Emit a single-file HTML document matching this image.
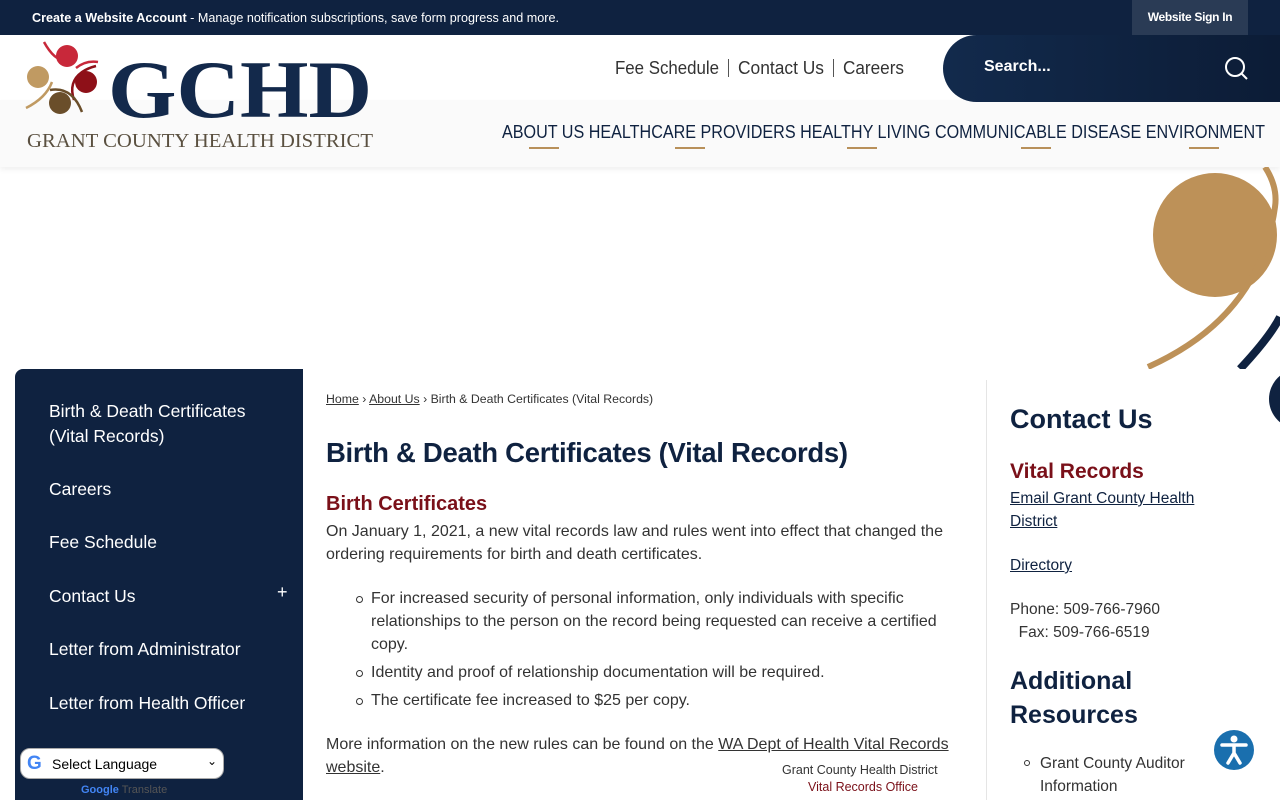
<!DOCTYPE html>
<html><head><meta charset="utf-8">
<style>
*{box-sizing:border-box;margin:0;padding:0}
body{width:1280px;height:800px;overflow:hidden;font-family:"Liberation Sans",sans-serif;background:#fff;position:relative}
.top{height:35px;background:#0f2240;color:#fff;font-size:12px;position:relative}
.top .sign{position:absolute;right:32px;top:0;width:116px;height:35px;background:#2a3b55;font-size:12px;font-weight:bold;text-align:center;line-height:35px;letter-spacing:-.3px}
.hdr{position:absolute;top:35px;left:0;width:1280px;height:132px;background:#fff}
.band{position:absolute;top:100px;left:0;width:1280px;height:67px;background:#fafafa;box-shadow:0 3px 5px rgba(0,0,0,.06)}
.search{position:absolute;left:943px;top:35px;width:337px;height:67px;background:linear-gradient(90deg,#122a4c,#0c1c36);border-radius:34px 0 0 34px}
.search .s{position:absolute;left:41px;top:23px;color:#fff;font-weight:bold;font-size:16px}
.ul{position:absolute;top:147px;width:30px;height:2px;background:#b8905a}
.side{position:absolute;left:15px;top:369px;width:288px;height:431px;background:#0f2240;border-radius:8px 0 0 0;color:#fff;font-size:17.5px}
.side div{position:absolute;left:34px;line-height:25px}
.main{position:absolute;left:303px;top:369px;width:962px;height:431px;background:#fff}
.crumb{position:absolute;left:326px;top:392px;font-size:12.3px;color:#333}
h1{position:absolute;left:326px;top:437px;font-size:27.5px;color:#0f2240;font-weight:bold;letter-spacing:-.3px}
.h2{position:absolute;left:326px;top:493px;font-size:20px;color:#7a1019;font-weight:bold}
.p{position:absolute;left:326px;font-size:16px;color:#333;line-height:23px}
.li{position:absolute;left:371px;font-size:16px;color:#333;line-height:23px;width:575px}
.li:before{content:"";position:absolute;left:-15px;top:9px;width:5px;height:5px;border:1px solid #333;border-radius:50%}
.rcol{position:absolute;left:986px;top:380px;width:1px;height:420px;background:#e5e5e5}
.r{position:absolute;left:1010px;color:#333;font-size:15.5px;line-height:23px}
.r u{color:#0f2240}
</style></head><body>
<div class="top"><svg style="position:absolute;left:32px;top:0" width="560" height="35"><text x="0" y="22" font-size="12.5" fill="#fff" textLength="527" lengthAdjust="spacingAndGlyphs"><tspan font-weight="bold">Create a Website Account</tspan> - Manage notification subscriptions, save form progress and more.</text></svg><div class="sign">Website Sign In</div></div>
<div class="hdr"></div>
<div class="band"></div>
<svg style="position:absolute;left:24px;top:38px" width="352" height="114">
<path d="M20 4 Q32 26 46 22" stroke="#c8283a" stroke-width="2.5" fill="none"/>
<path d="M52 30 Q62 22 74 24" stroke="#c8283a" stroke-width="2.5" fill="none"/>
<path d="M50 62 Q44 44 58 34 Q64 30 72 28" stroke="#8e1018" stroke-width="2.5" fill="none"/>
<path d="M2 70 Q22 60 28 44" stroke="#c09a62" stroke-width="2.5" fill="none"/>
<path d="M26 52 Q48 48 58 74" stroke="#6a4e2a" stroke-width="2.5" fill="none"/>
<circle cx="43" cy="18" r="11" fill="#c8283a"/><circle cx="62" cy="44" r="11" fill="#8e1018"/><circle cx="14" cy="39" r="11" fill="#c09a62"/><circle cx="36" cy="65" r="11" fill="#6a4e2a"/>
<text x="84" y="79" font-family="Liberation Serif" font-weight="bold" font-size="82" fill="#13294b" textLength="264" lengthAdjust="spacingAndGlyphs">GCHD</text>
<text x="3" y="109" font-family="Liberation Serif" font-size="19.5" fill="#5a5040" textLength="346" lengthAdjust="spacingAndGlyphs">GRANT COUNTY HEALTH DISTRICT</text>
</svg>
<svg style="position:absolute;left:600px;top:55px" width="320" height="28" font-size="18" fill="#333">
<text x="15" y="19" textLength="104" lengthAdjust="spacingAndGlyphs">Fee Schedule</text>
<text x="138" y="19" textLength="86" lengthAdjust="spacingAndGlyphs">Contact Us</text>
<text x="243" y="19" textLength="61" lengthAdjust="spacingAndGlyphs">Careers</text>
<rect x="128" y="4" width="1" height="18" fill="#555"/><rect x="233" y="4" width="1" height="18" fill="#555"/>
</svg>
<div class="search"><div class="s">Search...</div>
<svg style="position:absolute;left:281px;top:21px" width="26" height="26"><circle cx="11" cy="11" r="9" stroke="#fff" stroke-width="2" fill="none"/><path d="M17 17 L23 23" stroke="#fff" stroke-width="2"/></svg></div>
<svg style="position:absolute;left:502px;top:118px" width="770" height="28"><text y="20" font-size="18" fill="#0f2240" textLength="763" lengthAdjust="spacingAndGlyphs">ABOUT US HEALTHCARE PROVIDERS HEALTHY LIVING COMMUNICABLE DISEASE ENVIRONMENT</text></svg>
<div class="ul" style="left:529px"></div><div class="ul" style="left:675px"></div><div class="ul" style="left:847px"></div><div class="ul" style="left:1021px"></div><div class="ul" style="left:1189px"></div>
<svg style="position:absolute;left:1140px;top:167px" width="140" height="202">
<circle cx="75" cy="68" r="62" fill="#bd9158"/>
<path d="M8 200 Q120 150 135 40 Q138 20 125 0" stroke="#bd9158" stroke-width="6" fill="none"/>
<path d="M100 202 Q130 170 140 150" stroke="#0f2240" stroke-width="8" fill="none"/>
</svg>
<div class="main"></div>
<div style="position:absolute;left:1265px;top:369px;width:15px;height:60px;overflow:hidden"><div style="position:absolute;left:4px;top:0;width:60px;height:60px;border-radius:50%;background:#0f2240"></div></div>
<div class="side">
<div style="top:30px">Birth &amp; Death Certificates<br>(Vital Records)</div>
<div style="top:108px">Careers</div>
<div style="top:161px">Fee Schedule</div>
<div style="top:215px">Contact Us</div>
<span style="position:absolute;left:262px;top:213px;font-size:18px">+</span>
<div style="top:268px">Letter from Administrator</div>
<div style="top:322px">Letter from Health Officer</div>
</div>
<div class="crumb"><u>Home</u> › <u>About Us</u> › Birth &amp; Death Certificates (Vital Records)</div>
<h1>Birth &amp; Death Certificates (Vital Records)</h1>
<div class="h2">Birth Certificates</div>
<div class="p" style="top:520px">On January 1, 2021, a new vital records law and rules went into effect that changed the<br>ordering requirements for birth and death certificates.</div>
<div class="li" style="top:587px">For increased security of personal information, only individuals with specific<br>relationships to the person on the record being requested can receive a certified<br>copy.</div>
<div class="li" style="top:661px">Identity and proof of relationship documentation will be required.</div>
<div class="li" style="top:689px">The certificate fee increased to $25 per copy.</div>
<div class="p" style="top:733px">More information on the new rules can be found on the <u>WA Dept of Health Vital Records</u><br><u>website</u>.</div>
<div style="position:absolute;left:782px;top:763px;font-size:12.5px;color:#333">Grant County Health District</div>
<div style="position:absolute;left:808px;top:780px;font-size:12.5px;color:#7a1019">Vital Records Office</div>
<div class="rcol"></div>
<div class="r" style="top:408px;font-size:27px;font-weight:bold;color:#0f2240">Contact Us</div>
<div class="r" style="top:460px;font-size:21px;font-weight:bold;color:#7a1019">Vital Records</div>
<div class="r" style="top:487px"><u>Email Grant County Health<br>District</u></div>
<div class="r" style="top:554px"><u>Directory</u></div>
<div class="r" style="top:598px">Phone: 509-766-7960<br>&nbsp;&nbsp;Fax: 509-766-6519</div>
<div class="r" style="top:664px;font-size:25px;font-weight:bold;color:#0f2240;line-height:34px">Additional<br>Resources</div>
<div class="r" style="top:752px;left:1040px">Grant County Auditor<br>Information</div>
<div style="position:absolute;left:1024px;top:760px;width:6px;height:6px;border:1px solid #333;border-radius:50%"></div>
<svg style="position:absolute;left:1213px;top:729px" width="42" height="42"><circle cx="21" cy="21" r="20" fill="#1a6fae"/><circle cx="21" cy="10" r="3.5" fill="#fff"/><path d="M9 16 L33 16 M21 16 L21 25 M21 24 L15 34 M21 24 L27 34" stroke="#fff" stroke-width="3.5" stroke-linecap="round" fill="none"/></svg>
<div style="position:absolute;left:20px;top:748px;width:204px;height:31px;background:#fff;border:1px solid #aaa;border-radius:10px;font-size:14px;color:#000">
<span style="position:absolute;left:6px;top:4px;font-size:19px;font-weight:bold;color:#4285f4">G</span>
<span style="position:absolute;left:31px;top:7px">Select Language</span>
<span style="position:absolute;right:6px;top:5px;font-size:12px">⌄</span></div>
<div style="position:absolute;left:81px;top:784px;font-size:11px"><b style="color:#4285f4">Google</b> <span style="color:#555">Translate</span></div>
</body></html>
